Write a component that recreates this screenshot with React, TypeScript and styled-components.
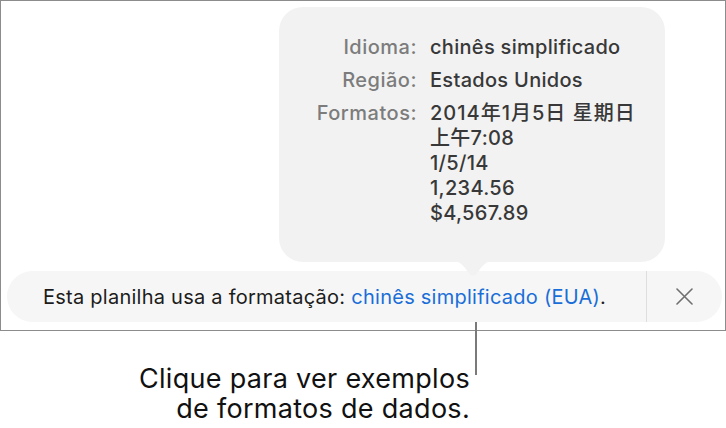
import React from "react";
import styled, { createGlobalStyle } from "styled-components";

const GlobalStyle = createGlobalStyle`
  html, body {
    margin: 0;
    padding: 0;
    background: #ffffff;
  }
  body {
    font-family: Inter, "Noto Sans", "Noto Sans CJK SC", sans-serif;
    -webkit-font-smoothing: antialiased;
  }
`;

const Page = styled.div`
  position: relative;
  width: 726px;
  height: 428px;
  overflow: hidden;
`;

const Frame = styled.div`
  box-sizing: border-box;
  width: 726px;
  height: 331px;
  border: 1.5px solid #8c8c8c;
  display: flex;
  flex-direction: column;
  padding: 6px 3px 8px 6px;
`;

const Popover = styled.div`
  position: relative;
  box-sizing: border-box;
  width: 386px;
  height: 255px;
  margin-left: 272px;
  background: #f2f2f2;
  border-radius: 24px;
  padding: 28px 0 0 28px;
  display: grid;
  grid-template-columns: 110px auto;
  column-gap: 13px;
  row-gap: 8px;
  align-content: start;
  font-size: 20px;
  font-weight: 500;
  line-height: 25px;
  letter-spacing: 0.3px;
`;

const Arrow = styled.svg`
  position: absolute;
  left: 174px;
  top: 254px;
`;

const Label = styled.div`
  text-align: right;
  color: #7c7c7c;
  letter-spacing: 0.5px;
`;

const Value = styled.div`
  color: #383838;
  white-space: nowrap;
`;

const Line = styled.div<{ $cjk?: boolean }>`
  letter-spacing: ${(p) => (p.$cjk ? "1px" : "inherit")};
`;

const Bar = styled.div`
  margin-top: auto;
  height: 51px;
  border-radius: 26px;
  background: #f6f6f6;
  display: flex;
  align-items: stretch;
`;

const Message = styled.div`
  flex: 1;
  display: flex;
  align-items: center;
  padding-left: 36px;
  font-size: 20px;
  letter-spacing: 0.25px;
  color: #1c1c1c;
  white-space: nowrap;
`;

const Link = styled.span`
  color: #1a6ed8;
  margin-left: 6px;
`;

const Divider = styled.div`
  width: 1px;
  background: #dedede;
`;

const Close = styled.button`
  width: 75px;
  border: none;
  background: transparent;
  padding: 0;
  display: flex;
  align-items: center;
  justify-content: center;
  cursor: pointer;
`;

const Leader = styled.div`
  position: absolute;
  left: 475px;
  top: 322px;
  width: 2px;
  height: 53px;
  background: #7a7a7a;
`;

const Callout = styled.div`
  width: 470px;
  padding-top: 33px;
  text-align: right;
  font-size: 27px;
  letter-spacing: 0.3px;
  line-height: 30px;
  color: #111111;
`;

const rows: { label: string; values: string[] }[] = [
  { label: "Idioma:", values: ["chinês simplificado"] },
  { label: "Região:", values: ["Estados Unidos"] },
  {
    label: "Formatos:",
    values: ["2014年1月5日 星期日", "上午7:08", "1/5/14", "1,234.56", "$4,567.89"],
  },
];

const hasCjk = (s: string) => /[\u4e00-\u9fff]/.test(s) && s.length > 10;

export default function App() {
  return (
    <>
      <GlobalStyle />
      <Page>
        <Frame>
          <Popover>
            {rows.map((row) => (
              <React.Fragment key={row.label}>
                <Label>{row.label}</Label>
                <Value>
                  {row.values.map((v) => (
                    <Line key={v} $cjk={hasCjk(v)}>
                      {v}
                    </Line>
                  ))}
                </Value>
              </React.Fragment>
            ))}
            <Arrow width="40" height="18" viewBox="0 0 40 18">
              <path d="M0 0 H40 C33 0 30 4 25 11 Q20 18 15 11 C10 4 7 0 0 0 Z" fill="#f2f2f2" />
            </Arrow>
          </Popover>
          <Bar>
            <Message>
              Esta planilha usa a formatação:<Link>chinês simplificado (EUA)</Link>.
            </Message>
            <Divider />
            <Close aria-label="Fechar">
              <svg width="17" height="17" viewBox="0 0 17 17">
                <path d="M1 1 L16 16 M16 1 L1 16" stroke="#6f6f6f" strokeWidth="1.6" strokeLinecap="round" />
              </svg>
            </Close>
          </Bar>
        </Frame>
        <Leader />
        <Callout>
          Clique para ver exemplos
          <br />
          de formatos de dados.
        </Callout>
      </Page>
    </>
  );
}
